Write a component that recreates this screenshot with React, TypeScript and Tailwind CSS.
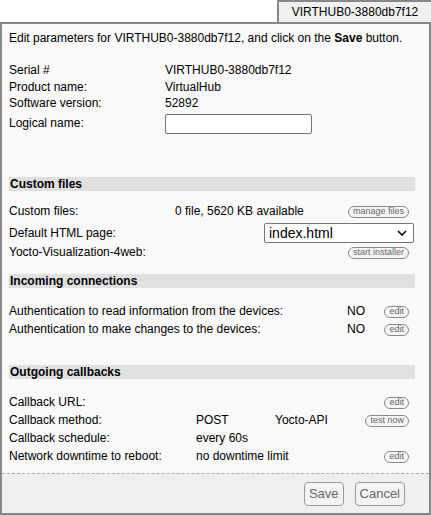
import React from "react";

const Pill = ({ label }: { label: string }) => (
  <span className="inline-flex h-[12px] items-center rounded-full border border-[#8a8a8a] bg-[#f6f6f6] px-[4px] text-[9px] leading-none text-[#666]">
    {label}
  </span>
);

const SectionHead = ({ title }: { title: string }) => (
  <div className="ml-[7px] mr-[14px] h-[14px] bg-[#e0e0e0] pl-[1px] font-bold leading-[14px]">{title}</div>
);

export default function App() {
  return (
    <div className="h-[515px] w-[431px] bg-white text-[12px] leading-[17px] text-black" style={{ fontFamily: '"Liberation Sans", Arial, sans-serif' }}>
      <div className="flex h-[22px] justify-end">
        <div className="flex w-[154px] items-center justify-center border-l-2 border-t-2 border-[#888] bg-[#f0f0f0] pt-[1px]">
          VIRTHUB0-3880db7f12
        </div>
      </div>
      <div className="flex h-[493px] flex-col border-2 border-[#888] bg-[#f9f9f9]">
        <div className="px-[7px] pt-[6px]">
          Edit parameters for VIRTHUB0-3880db7f12, and click on the <b>Save</b> button.
        </div>

        <div className="mt-[15px] grid grid-cols-[156px_1fr] items-center px-[7px] leading-[16.5px]">
          <div>Serial #</div>
          <div>VIRTHUB0-3880db7f12</div>
          <div>Product name:</div>
          <div>VirtualHub</div>
          <div>Software version:</div>
          <div>52892</div>
          <div className="pt-[2px]">Logical name:</div>
          <div className="flex pt-[2px]">
            <input className="h-[20px] w-[147px] rounded-[2px] border border-[#767676] bg-white" />
          </div>
        </div>

        <div className="mt-[43px]">
          <SectionHead title="Custom files" />
          <div className="mt-[10px] flex flex-col pl-[7px]">
            <div className="flex h-[22px] items-center pr-[20px]">
              <div className="w-[166px]">Custom files:</div>
              <div className="flex-1">0 file, 5620 KB available</div>
              <Pill label="manage files" />
            </div>
            <div className="flex h-[21px] items-center pr-[15px]">
              <div className="flex-1">Default HTML page:</div>
              <div className="flex h-[20px] w-[150px] items-center justify-between rounded-[2px] border border-[#767676] bg-white pl-[4px] pr-[6px] text-[14px]">
                <span>index.html</span>
                <svg width="10" height="6" viewBox="0 0 10 6">
                  <path d="M1 1l4 4 4-4" fill="none" stroke="#000" strokeWidth="1.5" />
                </svg>
              </div>
            </div>
            <div className="flex h-[18px] items-center pr-[20px]">
              <div className="flex-1">Yocto-Visualization-4web:</div>
              <Pill label="start installer" />
            </div>
          </div>
        </div>

        <div className="mt-[12px]">
          <SectionHead title="Incoming connections" />
          <div className="mt-[15px] flex flex-col pl-[7px] pr-[20px]">
            <div className="flex h-[18px] items-center">
              <div className="w-[338px]">Authentication to read information from the devices:</div>
              <div className="flex-1">NO</div>
              <Pill label="edit" />
            </div>
            <div className="flex h-[18px] items-center">
              <div className="w-[338px]">Authentication to make changes to the devices:</div>
              <div className="flex-1">NO</div>
              <Pill label="edit" />
            </div>
          </div>
        </div>

        <div className="mt-[26px]">
          <SectionHead title="Outgoing callbacks" />
          <div className="mt-[15px] flex flex-col pl-[7px] pr-[20px]">
            <div className="flex h-[18px] items-center">
              <div className="flex-1">Callback URL:</div>
              <Pill label="edit" />
            </div>
            <div className="flex h-[18px] items-center">
              <div className="w-[187px]">Callback method:</div>
              <div className="w-[79px]">POST</div>
              <div className="flex-1">Yocto-API</div>
              <Pill label="test now" />
            </div>
            <div className="flex h-[18px] items-center">
              <div className="w-[187px]">Callback schedule:</div>
              <div className="flex-1">every 60s</div>
            </div>
            <div className="flex h-[18px] items-center">
              <div className="w-[187px]">Network downtime to reboot:</div>
              <div className="flex-1">no downtime limit</div>
              <Pill label="edit" />
            </div>
          </div>
        </div>

        <div className="mt-auto flex h-[40px] items-center justify-end gap-[11px] border-t border-dashed border-[#aaa] bg-[#efefef] pr-[24px]">
          <button className="h-[24px] rounded-[4px] border border-[#999] bg-[#f4f4f4] px-[4px] text-[13px] text-[#666]">Save</button>
          <button className="h-[24px] rounded-[4px] border border-[#999] bg-[#f4f4f4] px-[4px] text-[13px] text-[#666]">Cancel</button>
        </div>
      </div>
    </div>
  );
}
